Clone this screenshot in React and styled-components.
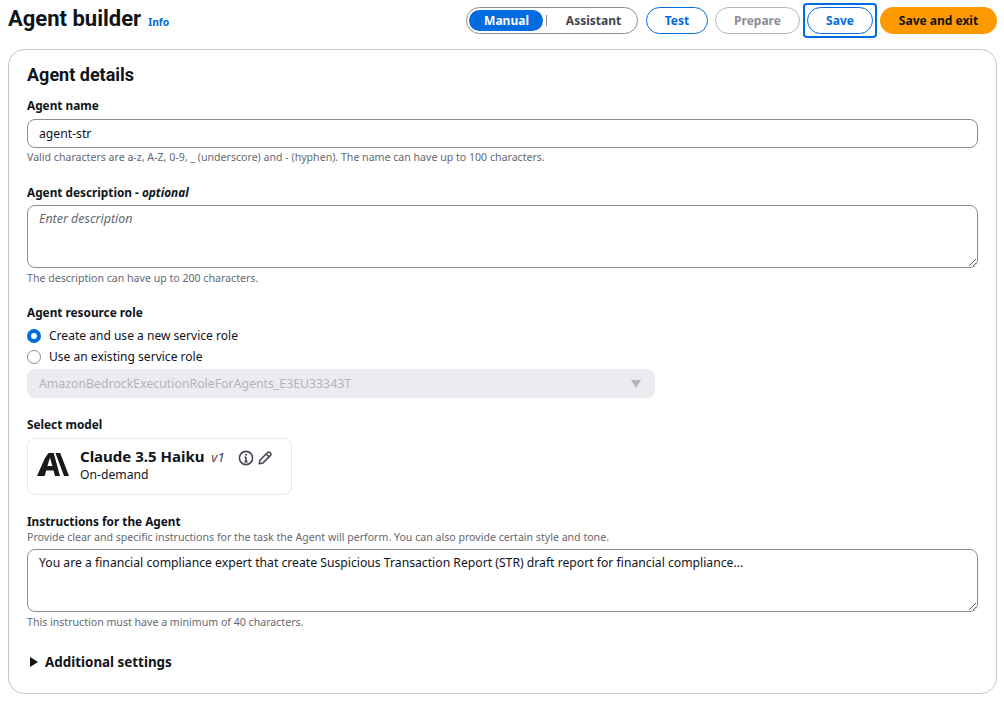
import React from 'react';
import styled, { createGlobalStyle } from 'styled-components';

const GlobalStyle = createGlobalStyle`
  html, body {
    margin: 0;
    background: #ffffff;
    font-family: "Noto Sans", "Open Sans", sans-serif;
    color: #0f141a;
  }
  * { box-sizing: border-box; }
`;

const App = () => {
  return (
    <Page>
      <GlobalStyle />
      <TopBar>
        <TitleGroup>
          <Title>Agent builder</Title>
          <InfoLink>Info</InfoLink>
        </TitleGroup>
        <Actions>
          <ModeToggle>
            <ModeOption $active>Manual</ModeOption>
            <ModeDivider />
            <ModeOption>Assistant</ModeOption>
          </ModeToggle>
          <ActionButton $width={62}>Test</ActionButton>
          <ActionButton $width={85} disabled>Prepare</ActionButton>
          <FocusRing>
            <ActionButton $width={66}>Save</ActionButton>
          </FocusRing>
          <PrimaryButton>Save and exit</PrimaryButton>
        </Actions>
      </TopBar>

      <Card>
        <CardTitle>Agent details</CardTitle>

        <Field $gap={20}>
          <Label $below={6}>Agent name</Label>
          <TextInput defaultValue="agent-str" />
          <Hint $top={2}>Valid characters are a-z, A-Z, 0-9, _ (underscore) and - (hyphen). The name can have up to 100 characters.</Hint>
        </Field>

        <Field $gap={19}>
          <Label>Agent description - <em>optional</em></Label>
          <TextArea placeholder="Enter description" />
          <Hint>The description can have up to 200 characters.</Hint>
        </Field>

        <Field $gap={18}>
          <Label>Agent resource role</Label>
          <RadioRow>
            <RadioDot $checked />
            Create and use a new service role
          </RadioRow>
          <RadioRow>
            <RadioDot />
            Use an existing service role
          </RadioRow>
          <DisabledSelect>
            AmazonBedrockExecutionRoleForAgents_E3EU33343T
            <svg width="10" height="8" viewBox="0 0 10 8"><path d="M0 0h10L5 8z" fill="#b4b4bb" /></svg>
          </DisabledSelect>
        </Field>

        <Field $gap={18}>
          <Label $below={6}>Select model</Label>
          <ModelCard>
            <AnthropicLogo width="32" height="23" viewBox="0 0 32 23">
              <path d="M11.5 0h5.2L23 23h-5l-1.5-5.6H9.2L7.6 23H0L8 5z M10.4 13h5L13 4.4z" fill="#191919" fillRule="evenodd" />
              <path d="M18.4 0h4.8L32 23h-4.9z" fill="#191919" />
            </AnthropicLogo>
            <ModelText>
              <ModelName>Claude 3.5 Haiku <small>v1</small></ModelName>
              <ModelType>On-demand</ModelType>
            </ModelText>
            <ModelIcons>
              <svg width="16" height="16" viewBox="0 0 16 16" fill="none" stroke="#424650" strokeWidth="1.6">
                <circle cx="8" cy="8" r="6.6" />
                <path d="M8 7v4.6M6.6 7H8M6.4 11.6h3.2" />
                <path d="M8 4v1.6" strokeWidth="1.8" />
              </svg>
              <svg width="14" height="14" viewBox="0 0 14 14" fill="none" stroke="#424650" strokeWidth="1.5" strokeLinejoin="round">
                <path d="M1.2 12.8l.7-3.6L9.6 1.5a1.6 1.6 0 0 1 2.3 0l.6.6a1.6 1.6 0 0 1 0 2.3L4.8 12.1z" />
                <path d="M8.2 3l2.8 2.8" />
              </svg>
            </ModelIcons>
          </ModelCard>
        </Field>

        <Field $gap={23}>
          <Label>Instructions for the Agent</Label>
          <Description>Provide clear and specific instructions for the task the Agent will perform. You can also provide certain style and tone.</Description>
          <TextArea defaultValue="You are a financial compliance expert that create Suspicious Transaction Report (STR) draft report for financial compliance..." />
          <Hint>This instruction must have a minimum of 40 characters.</Hint>
        </Field>

        <Expander>
          <svg width="8" height="10" viewBox="0 0 8 10"><path d="M0 0l8 5-8 5z" fill="#0f141a" /></svg>
          Additional settings
        </Expander>
      </Card>
    </Page>
  );
};

export default App;

const Page = styled.div`
  width: 1004px;
  height: 701px;
  padding: 3px 7px 0 8px;
  overflow: hidden;
`;

const TopBar = styled.div`
  display: flex;
  align-items: center;
  justify-content: space-between;
  height: 35px;
`;

const TitleGroup = styled.div`
  display: flex;
  align-items: baseline;
  gap: 7px;
  padding-bottom: 4px;
`;

const Title = styled.h1`
  margin: 0;
  font-family: Roboto, sans-serif;
  font-size: 22px;
  line-height: 30px;
  font-weight: 700;
`;

const InfoLink = styled.a`
  font-size: 10.3px;
  font-weight: 700;
  color: #006ce0;
`;

const Actions = styled.div`
  display: flex;
  align-items: center;
  gap: 7px;
`;

const ModeToggle = styled.div`
  display: flex;
  align-items: center;
  width: 172px;
  height: 27px;
  margin-right: 1px;
  padding: 0 2px;
  border: 1px solid #8c8c94;
  border-radius: 14px;
`;

const ModeOption = styled.div`
  display: flex;
  align-items: center;
  justify-content: center;
  width: ${p => (p.$active ? '75px' : '89px')};
  height: 21px;
  padding-left: ${p => (p.$active ? '1px' : '5px')};
  border-radius: 11px;
  font-size: 12px;
  font-weight: 700;
  background: ${p => (p.$active ? '#006ce0' : 'transparent')};
  color: ${p => (p.$active ? '#ffffff' : '#424650')};
`;

const ModeDivider = styled.span`
  width: 1px;
  height: 11px;
  margin-left: 3px;
  background: #8c8c94;
`;

const ActionButton = styled.button`
  width: ${p => p.$width}px;
  height: 27px;
  padding: 0;
  background: #ffffff;
  border: 1px solid ${p => (p.disabled ? '#b4b4bb' : '#006ce0')};
  border-radius: 14px;
  font-family: inherit;
  font-size: 12px;
  font-weight: 700;
  color: ${p => (p.disabled ? '#8c8c94' : '#006ce0')};
`;

const FocusRing = styled.div`
  display: flex;
  align-items: center;
  justify-content: center;
  width: 74px;
  height: 35px;
  margin: 0 -4px;
  border: 2px solid #006ce0;
  border-radius: 4px;
`;

const PrimaryButton = styled.button`
  width: 117px;
  height: 27px;
  padding: 0;
  background: #ff9900;
  border: none;
  border-radius: 14px;
  font-family: inherit;
  font-size: 12px;
  font-weight: 700;
  color: #0f141a;
`;

const Card = styled.section`
  height: 645px;
  margin-top: 11px;
  padding: 12px 18px 0;
  border: 1px solid #c6c6cd;
  border-radius: 16px;
`;

const CardTitle = styled.h2`
  margin: 0 0 9px;
  font-family: Roboto, sans-serif;
  font-size: 18px;
  line-height: 26px;
  font-weight: 700;
`;

const Field = styled.div`
  display: flex;
  flex-direction: column;
  margin-bottom: ${p => p.$gap}px;
`;

const Label = styled.label`
  font-size: 11.8px;
  line-height: 16px;
  font-weight: 700;
  margin-bottom: ${p => p.$below ?? 5}px;

  em {
    font-style: italic;
  }
`;

const TextInput = styled.input`
  width: 100%;
  height: 29px;
  padding: 0 11px;
  border: 1px solid #8c8c94;
  border-radius: 8px;
  font-family: inherit;
  font-size: 12.2px;
  color: #0f141a;
  outline: none;
`;

const TextArea = styled.textarea`
  display: block;
  width: 100%;
  height: 63px;
  padding: 4px 11px;
  border: 1px solid #8c8c94;
  border-radius: 8px;
  font-family: inherit;
  font-size: 12.2px;
  line-height: 18px;
  color: #0f141a;
  outline: none;

  &::placeholder {
    font-size: 12.45px;
    font-style: italic;
    color: #656871;
  }
`;

const Hint = styled.div`
  margin-top: ${p => p.$top ?? 3}px;
  font-size: 10.6px;
  line-height: 14px;
  color: #656871;
`;

const Description = styled.div`
  margin: -4px 0 5px;
  font-size: 10.6px;
  line-height: 14px;
  color: #656871;
`;

const RadioRow = styled.div`
  display: flex;
  align-items: center;
  gap: 8px;
  height: 21px;
  font-size: 12.05px;
  color: #0f141a;
`;

const RadioDot = styled.span`
  width: 14px;
  height: 14px;
  border-radius: 50%;
  background: #ffffff;
  border: ${p => (p.$checked ? '4px solid #006ce0' : '1.5px solid #8c8c94')};
`;

const DisabledSelect = styled.div`
  display: flex;
  align-items: center;
  justify-content: space-between;
  width: 628px;
  height: 29px;
  margin-top: 2px;
  padding: 0 14px 0 12px;
  background: #ebebf0;
  border-radius: 8px;
  font-size: 12.3px;
  color: #b4b4bb;
`;

const ModelCard = styled.div`
  display: flex;
  align-items: flex-start;
  width: 265px;
  height: 57px;
  padding: 7px 9px;
  border: 1px solid #e8e8ee;
  border-radius: 8px;
`;

const AnthropicLogo = styled.svg`
  flex: none;
  margin: 7px 11px 0 0;
`;

const ModelText = styled.div`
  display: flex;
  flex-direction: column;
`;

const ModelName = styled.div`
  font-size: 15px;
  line-height: 20px;
  font-weight: 700;
  white-space: nowrap;

  small {
    margin-left: 3px;
    font-size: 13px;
    font-weight: 400;
    font-style: italic;
    color: #424650;
  }
`;

const ModelType = styled.div`
  font-size: 12.2px;
  line-height: 16px;
`;

const ModelIcons = styled.div`
  display: flex;
  align-items: center;
  gap: 4px;
  margin: 4px 0 0 13px;
`;

const Expander = styled.div`
  display: flex;
  align-items: center;
  gap: 7px;
  padding-left: 3px;
  font-size: 13.4px;
  line-height: 20px;
  font-weight: 700;
`;
